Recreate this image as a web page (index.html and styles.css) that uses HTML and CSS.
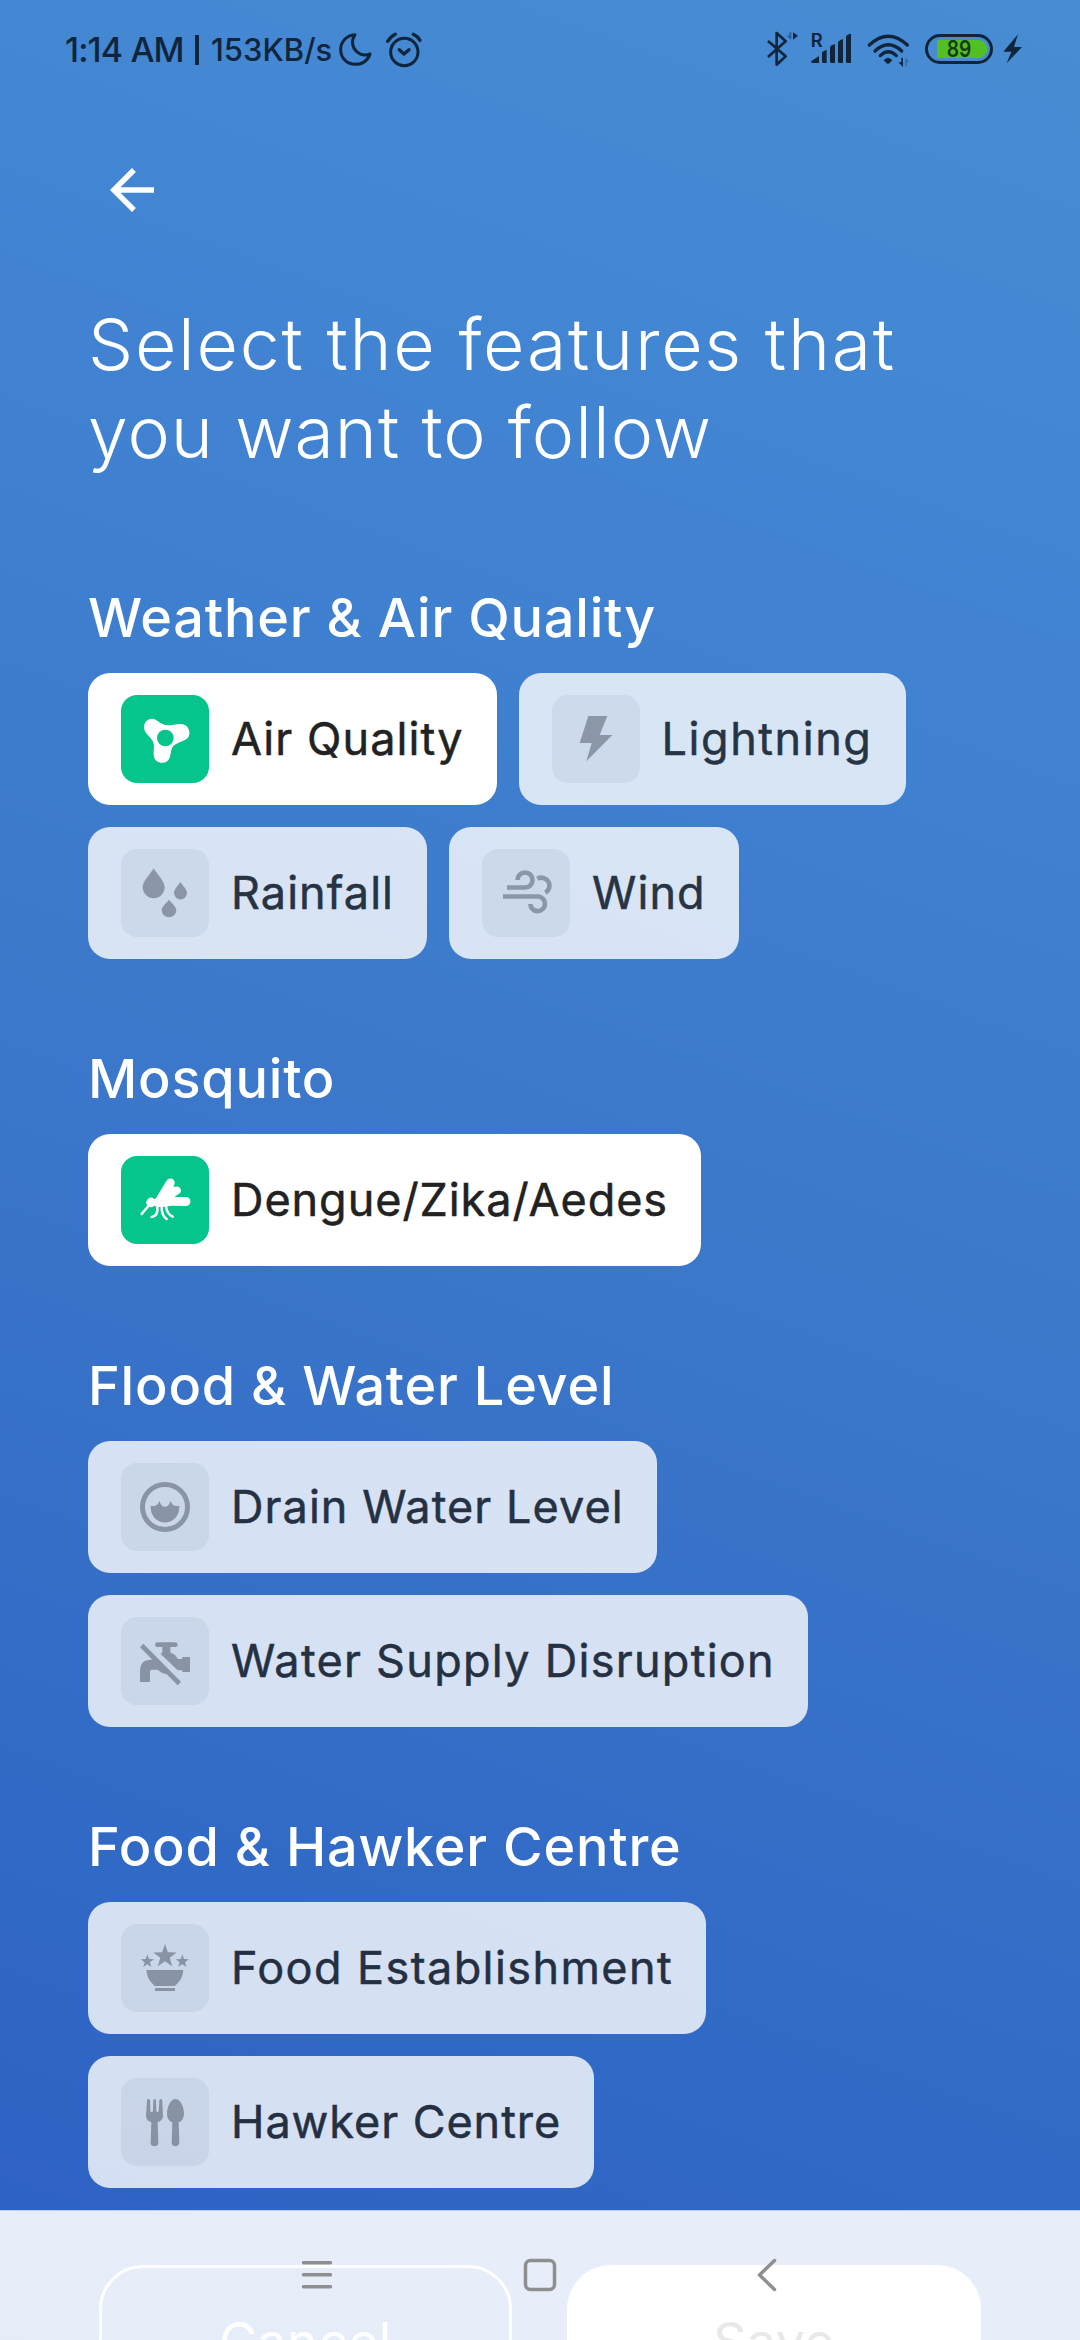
FILE: index.html
```html
<!DOCTYPE html>
<html lang="en">
<head>
<meta charset="utf-8">
<title>Select features</title>
<link rel="stylesheet" href="styles.css">
</head>
<body>
<div class="screen">
  <header class="status">
    <span class="time">1:14 AM</span>
    <span class="divider"></span>
    <span class="speed">153KB/s</span>
    <svg class="status-left" viewBox="890 0 260 240" fill="none" stroke="#10253c" stroke-width="9" stroke-linecap="round" stroke-linejoin="round">
      <path d="M944 74 C918 76 901 95 901 119 C901 144 920 163 945 163 C967 163 984 150 989 132 C975 137 960 135 949 125 C935 112 932 92 944 74Z"/>
      <circle cx="1092" cy="126" r="41"/>
      <path d="M1077 119 L1091 132 L1106 119M1042 94 Q1052 79 1065 73M1119 73 Q1132 79 1139 91" stroke-width="10"/>
    </svg>
    <svg class="status-right" viewBox="75 0 780 240">
      <g fill="none" stroke="#10253c">
        <path d="M84 93 L137 139 L110 164 V69 L137 94 L84 141" stroke-width="8" stroke-linejoin="round"/>
        <path d="M388 105 Q445 52 502 105M405 123 Q445 86 485 123M421 137 Q445 114 469 137" stroke-width="10" stroke-linecap="round"/>
        <rect x="559.500" y="76.500" width="195" height="81" rx="40.500" stroke-width="9"/>
      </g>
      <g fill="#10253c">
        <path d="M213 154 L237 138 V159 H218 Q213 159 213 154Z"/>
        <path d="M246 127 Q246 125 260 119 V159 H250 Q246 159 246 154Z"/>
        <path d="M270 111 Q271 107 285 102 V159 H274 Q270 159 270 154Z"/>
        <path d="M294 97 Q295 92 309 87 V159 H298 Q294 159 294 154Z"/>
        <path d="M318 80 Q319 74 333 71 V159 H322 Q318 159 318 154Z"/>
        <path d="M431 151 Q444 136 457 151 L448 160 Q444 164 440 160Z"/>
        <path d="M834 73 L790 125 H814 L800 160 L846 111 H822Z"/>
        <path d="M159 67 L174 77 L159 89Z"/>
        <path d="M484 143 H489 V171 L475 157 H484Z"/>
      </g>
      <path d="M148 67 H154 V89 L139 77 H148Z" fill="#10253c" opacity=".45"/>
      <path d="M496 142 L508 156 H501 V169 H496Z" fill="#3470ae"/>
      <path d="M591 90 H715 A27 27 0 0 1 715 144 H591Z" fill="#52c024"/>
      <text x="230" y="111" class="roam">R</text>
      <text x="620" y="142" class="charge" textLength="74" lengthAdjust="spacingAndGlyphs">89</text>
    </svg>
  </header>

  <main class="content">
    <svg class="back" viewBox="0 0 24 24"><path fill="#fff" d="M20 11H7.830l5.590-5.590L12 4l-8 8 8 8 1.410-1.410L7.830 13H20v-2z"/></svg>
    <h1 class="title"><span class="title-wide">Select the features that</span><br>you want to follow</h1>

    <section class="group">
      <h2 class="heading">Weather &amp; Air Quality</h2>
      <div class="chips">
        <div class="chip selected">
          <svg class="icon" viewBox="0 0 264 264"><path fill-rule="evenodd" d="M69 96 A24 24 0 0 1 105 75 C118 84 130 92 148 91 C160 90 168 86 180 87 A26 26 0 0 1 198 131 C180 143 160 143 153 160 C148 170 150 178 146 188 A25 25 0 0 1 98 180 C97 165 102 150 95 138 C88 125 69 115 69 96Z M108 129 a25 25 0 1 0 50 0 a25 25 0 1 0 -50 0Z"/></svg>
          <span class="label">Air Quality</span>
        </div>
        <div class="chip">
          <svg class="icon" viewBox="0 0 264 264"><path d="M109 63 H166 L143 120 H181 L103 199 L119 144 H83Z"/></svg>
          <span class="label loose">Lightning</span>
        </div>
        <div class="chip">
          <svg class="icon" viewBox="0 0 264 264"><path d="M98 58 C108 76 131 96 131 115 A33 33 0 0 1 65 115 C65 96 88 76 98 58Z M178 99 C184 109 198 121 198 132 A19.500 19.500 0 0 1 159 132 C159 121 172 109 178 99Z M144 152 C151 162 166 172 166 184 A22 21 0 0 1 122 184 C122 172 137 162 144 152Z"/></svg>
          <span class="label">Rainfall</span>
        </div>
        <div class="chip">
          <svg class="icon line" viewBox="0 0 264 264" stroke-width="14"><path d="M75 115.500 H129 A22.500 22.500 0 1 0 106.500 93M166 89 A23 23 0 0 1 190 131M63 142.500 H169 A22 22 0 1 1 145 165"/></svg>
          <span class="label">Wind</span>
        </div>
      </div>
    </section>

    <section class="group">
      <h2 class="heading">Mosquito</h2>
      <div class="chips">
        <div class="chip selected">
          <svg class="icon" viewBox="0 0 264 264">
            <path d="M104 128 L136 75 A13 13 0 0 1 160 86 L157 93 Q164 90 172 92 A12 12 0 0 1 178 110 L160 123 H195 A13 13 0 0 1 195 150 L150 149 L132 152 L108 154 Q103 150 100 149 A14 14 0 1 1 99 128Z"/>
            <path d="M82 150 L62 174M109 151 Q112 180 92 183M122 151 Q121 178 137 189M135 150 Q137 174 155 182" fill="none" stroke="#fff" stroke-width="7.500" stroke-linecap="round"/>
          </svg>
          <span class="label tight">Dengue/Zika/Aedes</span>
        </div>
      </div>
    </section>

    <section class="group">
      <h2 class="heading">Flood &amp; Water Level</h2>
      <div class="chips">
        <div class="chip">
          <svg class="icon" viewBox="0 0 264 264"><circle cx="132" cy="132" r="67.500" fill="none" stroke="#9e9e9e" stroke-width="15"/><path d="M89 128 Q109 134 115 113 Q120 131 132 131 Q144 131 149 113 Q155 134 175 128 C177 195 87 195 89 128Z"/></svg>
          <span class="label">Drain Water Level</span>
        </div>
        <div class="chip">
          <svg class="icon" viewBox="0 0 264 264"><path d="M109 76 H163 A7 7 0 0 1 163 90 H148 V107 Q166 112 170 126 H184 V120 H207 V165 H184 V160 H170 L119 111 L124 106 V90 H109 A7 7 0 0 1 109 76Z M67 80 L180 194 L170 205 L57 91Z M98 128 L141 170 Q127 174 116 163 L110 158 H92 Q87 158 87 164 V195 H57 V162 Q57 128 90 128Z"/></svg>
          <span class="label wide">Water Supply Disruption</span>
        </div>
      </div>
    </section>

    <section class="group">
      <h2 class="heading">Food &amp; Hawker Centre</h2>
      <div class="chips">
        <div class="chip">
          <svg class="icon" viewBox="0 0 264 264">
            <defs><path id="star" d="M0-1 .235-.324 .951-.309 .380.124 .588.809 0 .4-.588.809-.380.124-.951-.309-.235-.324Z"/></defs>
            <use href="#star" transform="translate(132 97) scale(37)"/>
            <use href="#star" transform="translate(79 112) scale(21)"/>
            <use href="#star" transform="translate(184 112) scale(21)"/>
            <path d="M76 138 H187 Q186 165 162 186 H101 Q77 165 76 138Z M102 192 H162 V201 H102Z"/>
          </svg>
          <span class="label wider">Food Establishment</span>
        </div>
        <div class="chip">
          <svg class="icon" viewBox="0 0 264 264"><path d="M78 67 Q82 59 87 67 L88 100 Q92 105 96 100 L97 67 Q101 59 105 67 L106 100 Q110 105 113 100 L115 67 Q120 59 124 67 L126 115 Q125 128 110 133 L112 196 Q110 205 100 205 Q90 205 89 196 L91 133 Q76 128 75 115Z M163 63 C180 63 189 90 189 107 C189 122 180 131 173 133 L175 196 Q172 205 163 205 Q154 205 152 196 L154 133 C147 131 138 122 138 107 C138 90 147 63 163 63Z"/></svg>
          <span class="label tight">Hawker Centre</span>
        </div>
      </div>
    </section>
  </main>

  <footer class="footer">
    <div class="button cancel">Cancel</div>
    <div class="button save">Save</div>
    <svg class="nav" viewBox="0 0 1080 130" fill="none" stroke="#8f8f8f" stroke-width="3.500" stroke-linecap="round" stroke-linejoin="round">
      <path d="M303.500 52.700 H330.500M303.500 64.700 H330.500M303.500 76.700 H330.500"/>
      <rect x="525.500" y="50.500" width="29" height="29" rx="5"/>
      <path d="M774.500 50.500 L759.500 65 L774.500 79.500"/>
    </svg>
  </footer>
</div>
</body>
</html>
```
FILE: styles.css
```css
body {
  margin: 0;
  font-family: Inter, "Liberation Sans", sans-serif;
}

.screen {
  width: 1080px;
  height: 2340px;
  overflow: hidden;
  display: flex;
  flex-direction: column;
  background: linear-gradient(200deg, #488dd3 0%, #4285d3 20%, #3b77ca 52%, #316ac6 80%, #2e5fc4 100%);
}

.status {
  display: flex;
  height: 80px;
  padding: 10px 55px 0 65px;
  flex: none;
  color: #10253c;
  line-height: 80px;
}

.time {
  width: 130px;
  font-size: 34px;
  font-weight: 500;
  letter-spacing: -.9px;
  white-space: nowrap;
}

.divider {
  width: 4px;
  height: 30px;
  margin-top: 25px;
  background: #10253c;
}

.speed {
  width: 138px;
  padding-left: 12px;
  font-size: 31px;
  font-weight: 500;
  box-sizing: border-box;
  white-space: nowrap;
}

.status-left {
  width: 86.667px;
  height: 80px;
}

.status-right {
  width: 260px;
  height: 80px;
  margin-left: auto;
}

.roam {
  font-size: 55px;
  font-weight: 600;
  fill: #10253c;
  text-anchor: middle;
}

.charge {
  font-size: 68px;
  font-weight: 600;
  fill: #173a12;
}

.content {
  display: flex;
  flex-direction: column;
  height: 2120px;
  flex: none;
  padding: 0 88px;
  box-sizing: border-box;
}

.back {
  width: 66px;
  height: 66px;
  margin: 67px 0 0 11px;
}

.title {
  margin: 77px 0 22px;
  height: 176px;
  font-size: 71.500px;
  line-height: 88px;
  font-weight: 300;
  letter-spacing: 1.05px;
  color: #fff;
  white-space: nowrap;
}

.title-wide {
  letter-spacing: 1.75px;
}

.group {
  margin-top: 88px;
}

.heading {
  margin: 0;
  height: 87px;
  line-height: 64px;
  font-size: 54px;
  font-weight: 500;
  letter-spacing: .78px;
  color: #fff;
  white-space: nowrap;
}

.chips {
  display: flex;
  flex-wrap: wrap;
  gap: 22px;
}

.chip {
  display: flex;
  align-items: center;
  gap: 22px;
  height: 132px;
  padding: 0 33px;
  box-sizing: border-box;
  border-radius: 22px;
  background: #fff;
  opacity: .8;
}

.chip.selected {
  opacity: 1;
}

.icon {
  width: 88px;
  height: 88px;
  flex: none;
  border-radius: 16px;
  background: #f0f1f2;
  fill: #9e9e9e;
}

.icon.line {
  fill: none;
  stroke: #9e9e9e;
}

.selected .icon {
  background: #05c48c;
  fill: #fff;
}

.label {
  font-size: 45px;
  line-height: 60px;
  font-weight: 400;
  letter-spacing: 1.07px;
  color: #222;
  white-space: nowrap;
  -webkit-text-stroke: .5px #222;
}

.label.tight {
  letter-spacing: .94px;
}

.label.wide {
  letter-spacing: 1.28px;
}

.label.wider {
  letter-spacing: 1.41px;
}

.label.loose {
  letter-spacing: 1.56px;
}

.footer {
  position: relative;
  display: flex;
  gap: 55px;
  height: 130px;
  padding: 54px 99px 0;
  box-sizing: border-box;
  overflow: hidden;
  border-top: 1px solid #c3cfea;
  background: rgba(255, 255, 255, .885);
  flex: none;
}

.button {
  height: 154px;
  flex: none;
  box-sizing: border-box;
  border-radius: 44px;
  font-size: 52px;
  line-height: 154px;
  letter-spacing: .3px;
  text-align: center;
}

.cancel {
  width: 413px;
  border: 3px solid #fff;
  line-height: 148px;
  color: #fff;
}

.save {
  width: 414px;
  background: #fff;
  color: #e8e8e8;
}

.nav {
  position: absolute;
  left: 0;
  top: -1px;
  width: 1080px;
  height: 130px;
}
```
